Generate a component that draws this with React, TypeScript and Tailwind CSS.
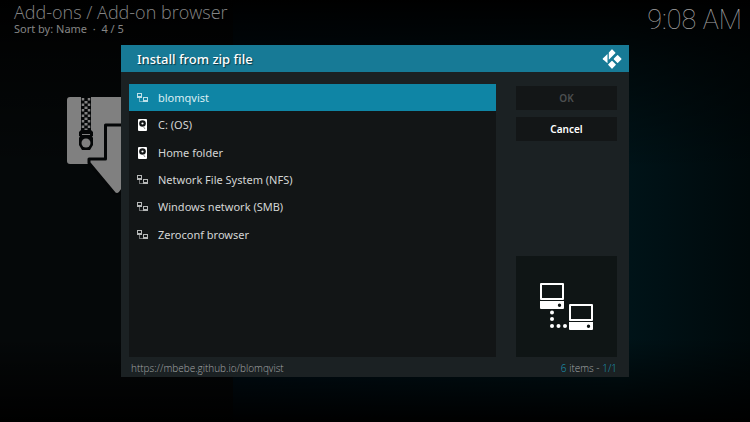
import type { SVGProps } from 'react';

type IconProps = SVGProps<SVGSVGElement>;

const NetworkIcon = (props: IconProps) => (
  <svg viewBox="0 0 54 47" fill="currentColor" aria-hidden="true" {...props}>
    <path
      fillRule="evenodd"
      d="M1 0h22q1 0 1 1v15q0 1-1 1H1q-1 0-1-1V1q0-1 1-1zM2 2v13h20V2z"
    />
    <path
      fillRule="evenodd"
      d="M0 18h24v7q0 1-1 1H1q-1 0-1-1zM19.500 20.500a1.700 1.700 0 1 0 0 3.400 1.700 1.700 0 0 0 0-3.400z"
    />
    <path
      fillRule="evenodd"
      d="M30 21h22q1 0 1 1v15q0 1-1 1H30q-1 0-1-1V22q0-1 1-1zM31 23v13h20V23z"
    />
    <path
      fillRule="evenodd"
      d="M29 39h24v7q0 1-1 1H30q-1 0-1-1zM48.500 41.500a1.700 1.700 0 1 0 0 3.400 1.700 1.700 0 0 0 0-3.400z"
    />
    <circle cx="12" cy="29.500" r="2" />
    <circle cx="12" cy="36" r="2" />
    <circle cx="12" cy="43" r="2" />
    <circle cx="18.500" cy="43" r="2" />
    <circle cx="25" cy="43" r="2" />
  </svg>
);

const SmallNetworkIcon = (props: IconProps) => (
  <svg viewBox="0 0 11 12" fill="currentColor" aria-hidden="true" {...props}>
    <path d="M0 1h5v1H0zM0 2h1v2H0zM4 2h1v2H4zM0 4h5v2H0z" opacity="0.85" />
    <path d="M6 5h5v1H6zM6 6h1v2H6zM10 6h1v2h-1zM6 8h5v2H6z" opacity="0.85" />
    <path d="M2 6h1v4H2zM3 9h3v1H3z" opacity="0.5" />
  </svg>
);

const DriveIcon = (props: IconProps) => (
  <svg viewBox="0 0 11 12" aria-hidden="true" {...props}>
    <rect x="1" width="9" height="12" rx="1" fill="#fff" />
    <circle cx="5.500" cy="4.500" r="3.300" fill="#121516" />
    <circle cx="5.500" cy="4.500" r="1.100" fill="#fff" />
    <path d="M6 7l2 3" stroke="#888" strokeWidth="1" />
  </svg>
);

const KodiLogo = (props: IconProps) => (
  <svg viewBox="0 0 20 20" fill="currentColor" aria-hidden="true" {...props}>
    <path d="M9.600.5q.4-.4.800 0l2.900 2.900q.4.400 0 .8L6.800 10.700V4q0-.5.300-.8z" />
    <path d="M5.500 4.900v9.300L.8 10.200q-.4-.4 0-.8z" />
    <path d="M15.200 6.200q.4-.4.800 0l3.300 3.400q.4.400 0 .8L16 13.700q-.4.400-.8 0l-3.300-3.300q-.4-.4 0-.8z" />
    <path d="M9.600 12q.4-.4.800 0l3.300 3.300q.4.400 0 .8l-3.300 3.400q-.4.400-.8 0l-3.300-3.400q-.4-.4 0-.8z" />
  </svg>
);

const ZipIcon = (props: IconProps) => (
  <svg viewBox="0 0 100 98" aria-hidden="true" {...props}>
    <path
      d="M3 0h94q3 0 3 3v61q0 3-3 3H3q-3 0-3-3V3q0-3 3-3z"
      fill="#808080"
    />
    <path
      d="M38.500 28h23v34h15.500L53 96q-3 3-6 0L22 66v-4h16.500z"
      fill="#808080"
      stroke="#040607"
      strokeWidth="3"
      strokeLinejoin="round"
    />
    <path d="M14 0h10v36H14z" fill="#040607" />
    <path
      d="M16 1v33M22 1v33"
      stroke="#808080"
      strokeWidth="2.500"
      strokeDasharray="2.500 3"
    />
    <path
      d="M19 4v31"
      stroke="#808080"
      strokeWidth="3"
      strokeDasharray="2.500 3"
    />
    <path d="M14 33h10l2 2v4h-1l1 2v7l-3 5h-8l-3-5v-7l1-2h-1v-4z" fill="#040607" />
    <path d="M15 37.500h8" stroke="#808080" strokeWidth="1" />
    <circle cx="19" cy="46" r="4.500" fill="#808080" />
  </svg>
);

const sources = [
  { label: 'blomqvist', Icon: SmallNetworkIcon },
  { label: 'C: (OS)', Icon: DriveIcon },
  { label: 'Home folder', Icon: DriveIcon },
  { label: 'Network File System (NFS)', Icon: SmallNetworkIcon },
  { label: 'Windows network (SMB)', Icon: SmallNetworkIcon },
  { label: 'Zeroconf browser', Icon: SmallNetworkIcon },
];

const App = () => {
  return (
    <div className="relative min-h-screen overflow-hidden bg-[#050809] font-['Noto_Sans',sans-serif] text-white">
      <div className="absolute inset-y-0 right-0 left-[31%] bg-linear-to-r from-[#000f18] via-[#001419] via-75% to-[#00090b]" />
      <div className="absolute inset-0 bg-[linear-gradient(#000,#0008_15%,#0000_40%,#0000_80%,#000_100%)]" />

      <header className="relative flex justify-between pr-2 pl-[14px]">
        <div className="pt-[2px] text-[#858585]">
          <h1 className="font-['Open_Sans',sans-serif] text-[18px] leading-5 font-light">
            Add-ons / Add-on browser
          </h1>
          <p className="text-[11px] leading-[14px]">Sort by: Name &nbsp;·&nbsp; 4 / 5</p>
        </div>
        <time className="pt-1 font-[Roboto] text-[27px] leading-8 font-thin text-[#a0a0a0]">
          9:08 AM
        </time>
      </header>
      <ZipIcon className="relative mt-[61px] ml-[67px] h-[98px] w-[100px]" />

      <div className="absolute inset-0 flex items-center justify-center">
        <section
          role="dialog"
          aria-labelledby="dialog-title"
          className="w-full max-w-[508px] bg-[#1b2123]"
        >
          <div className="flex h-[27px] items-center justify-between bg-[#177a96] pr-[7px] pl-4">
            <h2
              id="dialog-title"
              className="text-[13px] leading-4 font-medium text-shadow-[1px_1px_1px_#0008]"
            >
              Install from zip file
            </h2>
            <KodiLogo className="size-5" />
          </div>

          <div className="flex gap-5 pt-3 pr-3 pl-2">
            <ul className="grid h-[273px] flex-1 grid-rows-10 bg-[#121516]">
              {sources.map(({ label, Icon }, index) => (
                <li key={label}>
                  <button
                    type="button"
                    className={
                      index === 0
                        ? 'flex h-full w-full items-center bg-[#0f85a5] pt-px pl-2 text-left text-[#dceef3]'
                        : 'flex h-full w-full items-center pt-px pl-2 text-left text-[#d4d5d5]'
                    }
                  >
                    <span className="flex w-[21px]">
                      <Icon className="h-3 w-[11px]" />
                    </span>
                    <span className="text-[11px] leading-4">{label}</span>
                  </button>
                </li>
              ))}
            </ul>

            <div className="flex w-[101px] flex-col justify-between pt-[2px]">
              <div className="flex flex-col gap-[7px] text-[10px] leading-4 font-semibold">
                <button type="button" disabled className="h-6 bg-[#131617] text-[#4c4f50]">
                  OK
                </button>
                <button type="button" className="h-6 bg-[#131617]">
                  Cancel
                </button>
              </div>
              <div className="flex aspect-square items-center justify-center bg-[#0f1515]">
                <NetworkIcon className="h-[47px] w-[54px]" />
              </div>
            </div>
          </div>

          <footer className="flex h-5 items-center justify-between pt-[2px] pr-3 pl-[10px] font-['Open_Sans',sans-serif] text-[10px] leading-4 font-light text-[#a4a7a8]">
            <p>https://mbebe.github.io/blomqvist</p>
            <p>
              <span className="text-[#1c9bbd]">6</span> items -{' '}
              <span className="text-[#1c9bbd]">1/1</span>
            </p>
          </footer>
        </section>
      </div>
    </div>
  );
};

export default App;
